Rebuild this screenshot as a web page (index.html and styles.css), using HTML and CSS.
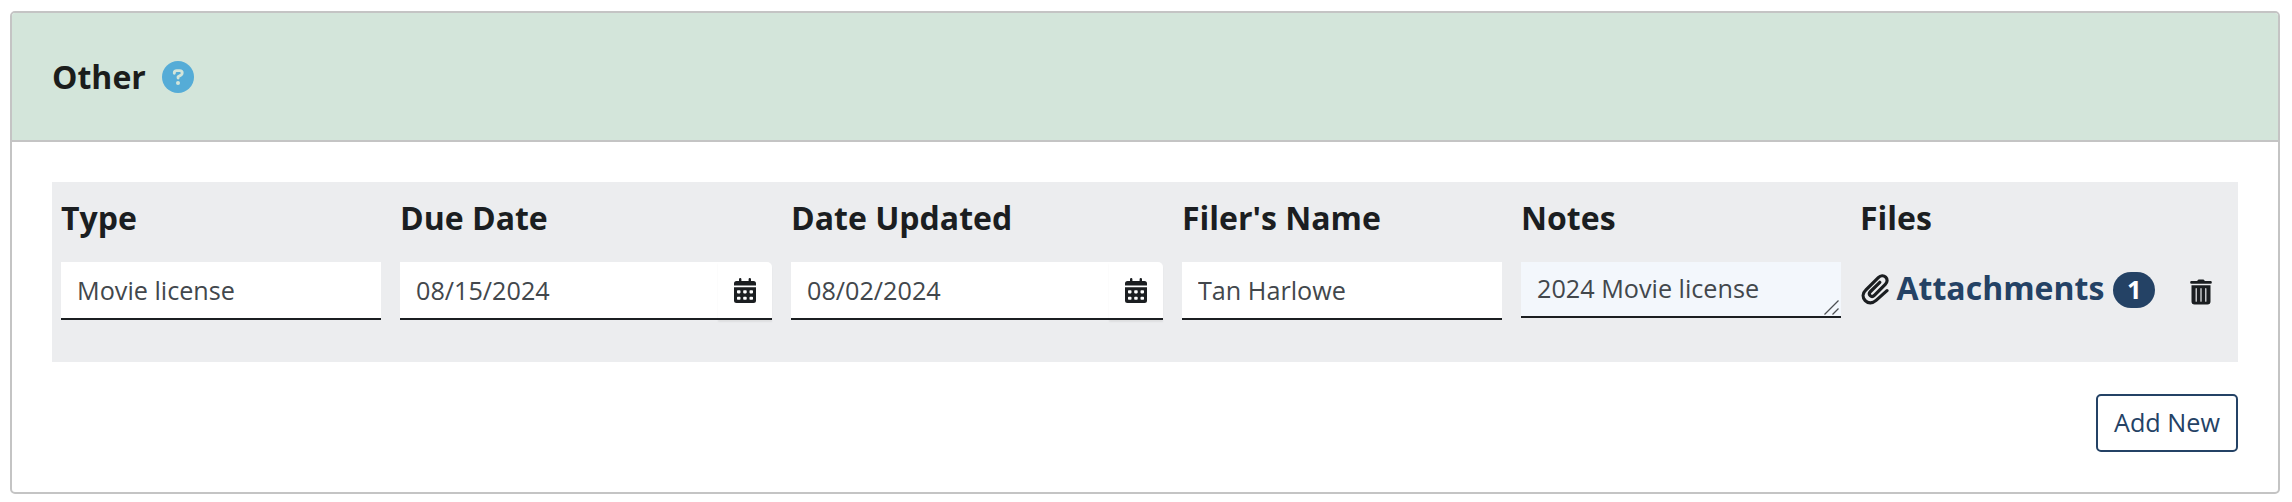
FILE: index.html
```
<!DOCTYPE html>
<html lang="en">
<head>
<meta charset="utf-8">
<title>Other</title>
<link rel="stylesheet" href="styles.css">
</head>
<body>
<svg class="defs" width="0" height="0" aria-hidden="true">
  <symbol id="calendar" viewBox="0 0 22 25">
    <path d="M5 1.2a1.2 1.2 0 0 1 2.4 0V3h7.200V1.200a1.200 1.200 0 0 1 2.400 0V3H19.500A2.500 2.500 0 0 1 22 5.500V7.600H0V5.500A2.500 2.500 0 0 1 2.500 3H5z"/>
    <path fill-rule="evenodd" d="M0 9.300H22V22.500A2.500 2.500 0 0 1 19.500 25H2.500A2.500 2.500 0 0 1 0 22.500zM3.800 12.300h1.900q.8 0 .8.800v1.500q0 .8-.8.800H3.800q-.8 0-.8-.8v-1.500q0-.8.800-.8zM10 12.300h1.900q.8 0 .8.800v1.500q0 .8-.8.800H10q-.8 0-.8-.8v-1.500q0-.8.800-.8zM16.300 12.300h1.900q.8 0 .8.800v1.500q0 .8-.8.800h-1.900q-.8 0-.8-.8v-1.500q0-.8.800-.8zM3.800 18.700h1.900q.8 0 .8.800V21q0 .8-.8.800H3.800Q3 21.800 3 21v-1.500q0-.8.800-.8zM10 18.700h1.900q.8 0 .8.800V21q0 .8-.8.800H10q-.8 0-.8-.8v-1.500q0-.8.800-.8zM16.300 18.700h1.900q.8 0 .8.800V21q0 .8-.8.800h-1.900q-.8 0-.8-.8v-1.500q0-.8.800-.8z"/>
  </symbol>
</svg>
<main class="card">
  <header class="card-header">
    <h2 class="title">Other</h2>
    <svg class="help" viewBox="0 0 32 32" aria-label="Help">
      <circle cx="16" cy="16" r="16" fill="#55acd7"/>
      <path d="M12.300 12.200V11.900Q12.300 9.600 14.700 9.600H17.600Q20.200 9.600 20.200 11.900Q20.200 13.400 18.700 14.300L16.100 15.800V17" fill="none" stroke="#d3e5da" stroke-width="2.900" stroke-linecap="round" stroke-linejoin="round"/>
      <circle cx="16" cy="22.100" r="2" fill="#d3e5da"/>
    </svg>
  </header>
  <div class="card-body">
    <div class="record">
      <div class="column">
        <div class="label">Type</div>
        <input class="field" type="text" value="Movie license">
      </div>
      <div class="column">
        <div class="label">Due Date</div>
        <div class="date">
          <input class="field" type="text" value="08/15/2024">
          <button class="pick" type="button" aria-label="Pick date"><svg class="calendar"><use href="#calendar"/></svg></button>
        </div>
      </div>
      <div class="column">
        <div class="label">Date Updated</div>
        <div class="date">
          <input class="field" type="text" value="08/02/2024">
          <button class="pick" type="button" aria-label="Pick date"><svg class="calendar"><use href="#calendar"/></svg></button>
        </div>
      </div>
      <div class="column">
        <div class="label">Filer's Name</div>
        <input class="field" type="text" value="Tan Harlowe">
      </div>
      <div class="column">
        <div class="label">Notes</div>
        <div class="notes">
          <textarea class="field area" rows="1">2024 Movie license</textarea>
          <svg class="grip" viewBox="0 0 15 15"><path d="M.5 14.500 14.500.5M8.500 14.500l6-6" fill="none" stroke="#4c4f52" stroke-width="1.300"/></svg>
        </div>
      </div>
      <div class="column">
        <div class="label">Files</div>
        <div class="files">
          <svg class="clip" viewBox="0 0 28 32">
            <path d="M26 17.600 15.100 27.400C11.600 30.500 7 30.600 4.200 27.600C1.300 24.500 1.500 20.100 4.700 17.100L17.300 4.600C19.600 2.400 22.700 2.200 24.700 4.200C26.700 6.200 26.500 9.200 24.300 11.400L13.600 22.200C12.100 23.700 10.300 23.800 9.200 22.700C8 21.500 8.100 19.900 9.500 18.500L18.800 9.300" fill="none" stroke="#1b1e21" stroke-width="3.200" stroke-linecap="round" stroke-linejoin="round"/>
          </svg>
          <a class="attachments">Attachments</a>
          <span class="count">1</span>
          <svg class="trash" viewBox="0 0 22 26">
            <path d="M7.500 1.400Q7.900.5 8.900.5h4.200q1 0 1.400.9l.3.700H20.500a1.300 1.300 0 0 1 0 2.700h-19a1.300 1.300 0 0 1 0-2.700H7.200z"/>
            <path fill-rule="evenodd" d="M1.500 6.300h19V22.600a3 3 0 0 1-3 3H4.500a3 3 0 0 1-3-3zM5.600 9.700V22.200a.6.600 0 0 0 1.200 0V9.700a.6.600 0 0 0-1.200 0zM10.400 9.700V22.200a.6.600 0 0 0 1.200 0V9.700a.6.600 0 0 0-1.200 0zM15.200 9.700V22.200a.6.600 0 0 0 1.200 0V9.700a.6.600 0 0 0-1.200 0z"/>
          </svg>
        </div>
      </div>
    </div>
    <div class="actions"><button class="add" type="button">Add New</button></div>
  </div>
</main>
</body>
</html>
```
FILE: styles.css
```
* { box-sizing: border-box; }
body {
  margin: 0;
  padding: 11px 12px 8px 10px;
  background: #fff;
  color: #1b1e21;
  font-family: "Open Sans", "Noto Sans", sans-serif;
  font-size: 25.2px;
}
.defs { position: absolute; }
.card {
  height: 483px;
  border: 2px solid #c4c4c4;
  border-radius: 5px;
  overflow: hidden;
}
.card-header {
  display: flex;
  align-items: center;
  gap: 16.500px;
  height: 129px;
  padding: 0 40px;
  background: #d3e5da;
  border-bottom: 2px solid #c4c4c4;
}
.title {
  margin: 0;
  color: #1b1d1c;
  font-size: 32px;
  line-height: 48px;
}
.help { width: 32px; height: 32px; }
.card-body { padding: 40px; }
.record {
  display: grid;
  grid-template-columns: 320px 372px 372px 320px 320px 1fr;
  column-gap: 19px;
  height: 180px;
  padding: 12px 9px 0;
  background: #ecedef;
}
.label {
  height: 68px;
  font-size: 32px;
  font-weight: 700;
  line-height: 48px;
}
.field {
  display: block;
  width: 100%;
  height: 58px;
  margin: 0;
  padding: 0 16px;
  border: 0;
  border-bottom: 2px solid #1b1e21;
  border-radius: 0;
  outline: 0;
  background: #fff;
  color: #42474c;
  font: inherit;
}
.date { display: flex; }
.date .field { flex: 1; width: 0; }
.pick {
  display: grid;
  place-items: center;
  width: 54px;
  height: 58px;
  padding: 0;
  border: 0;
  border-bottom: 2px solid #1b1e21;
  border-radius: 0 5px 0 0;
  background: #fff;
  box-shadow: 0 2px 2px rgba(0, 0, 0, .06);
}
.calendar { width: 22px; height: 25px; fill: #1b1e21; }
.notes { position: relative; }
.area {
  height: 56px;
  padding: 7px 16px;
  overflow: hidden;
  resize: none;
  line-height: 38px;
  background: #f3f7fc;
}
.grip { position: absolute; right: 2px; bottom: 3px; width: 15px; height: 15px; }
.files { display: flex; align-items: center; height: 56px; }
.clip { width: 28px; height: 32px; margin-left: 1px; margin-bottom: 2px; }
.attachments {
  margin-left: 7.500px;
  margin-bottom: 4px;
  color: #244265;
  font-size: 32px;
  font-weight: 700;
  line-height: 48px;
}
.count {
  display: grid;
  place-items: center;
  width: 42px;
  height: 36px;
  margin-left: 9px;
  border-radius: 18px;
  background: #244265;
  color: #fff;
  font-size: 25.6px;
  font-weight: 700;
  line-height: 36px;
}
.trash { width: 22px; height: 26px; margin-left: 35px; margin-top: 3px; fill: #1b1e21; }
.actions { display: flex; justify-content: flex-end; padding-top: 32px; }
.add {
  width: 142px;
  height: 58px;
  padding: 0 0 2px;
  border: 2px solid #244265;
  border-radius: 5px;
  background: #fff;
  color: #244265;
  font: inherit;
}
```
